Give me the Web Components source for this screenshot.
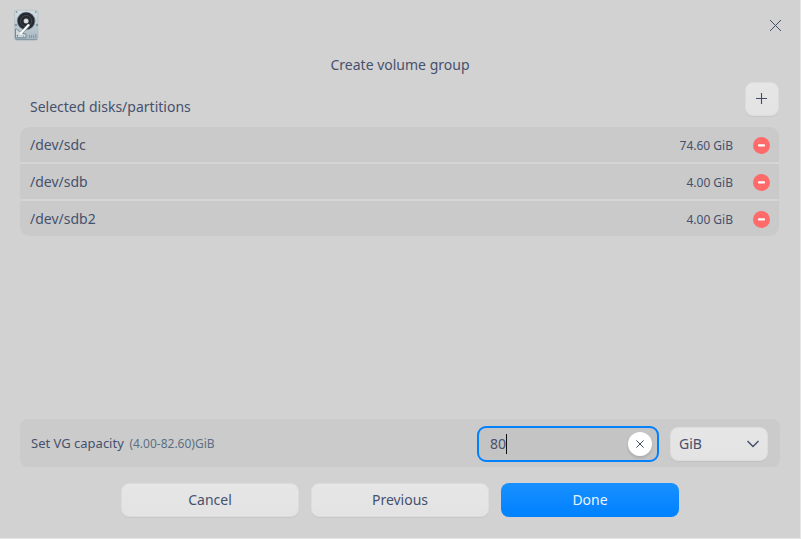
<!DOCTYPE html>
<html lang="en"><head><meta charset="utf-8"><title>Create volume group</title>
<style>
html,body{margin:0;height:100%;background:#e6e6e6}
body{font:14px/20px "Noto Sans",sans-serif;color:#46516d;overflow:hidden}
</style></head><body>
<vg-window>
  <disk-row slot="disks" size="74.60 GiB">/dev/sdc</disk-row>
  <disk-row slot="disks" size="4.00 GiB">/dev/sdb</disk-row>
  <disk-row slot="disks" size="4.00 GiB">/dev/sdb2</disk-row>
  <capacity-panel slot="capacity"></capacity-panel>
  <push-button slot="actions">Cancel</push-button>
  <push-button slot="actions">Previous</push-button>
  <push-button slot="actions" primary>Done</push-button>
</vg-window>
<script>
const define=(name,html)=>customElements.define(name,class extends HTMLElement{
  constructor(){super();this.attachShadow({mode:'open'}).innerHTML=html;}
  connectedCallback(){const s=this.shadowRoot.querySelector('[data-size]');if(s)s.textContent=this.getAttribute('size');}
});
define('push-button',`<style>
:host{display:flex;box-sizing:border-box;width:178px;height:34px;align-items:center;justify-content:center;border-radius:8px;background:linear-gradient(#e6e6e6,#e3e3e3);border:1px solid #dcdcdc;box-shadow:0 1px 1px #0000000d;padding-bottom:1px}
:host([primary]){background:linear-gradient(#1890ff,#0081ff);border:0;color:#ebf4ff;box-shadow:none}
:host([icon]){width:34px;padding:0}
:host([select]){width:98px;justify-content:space-between;padding:1px 7px 0 8px}
</style><slot></slot>`);
define('disk-icon',`<style>:host{display:block;width:26px;height:32px}svg{display:block}</style>
<svg width="26" height="32" viewBox="0 0 26 32"><defs>
<linearGradient id="g" x2="0" y2="1"><stop stop-color="#d3dee4"/><stop offset=".6" stop-color="#b9c8d0"/><stop offset="1" stop-color="#a6b5be"/></linearGradient></defs>
<rect x=".4" y="1.2" width="23.6" height="30" rx="2.5" fill="url(#g)" stroke="#a9b8c0" stroke-width=".6"/>
<path d="M1.5 30.5h21.5" stroke="#8799a4"/><path d="M1.6 3h2M20.8 3h2M2.6 2v2M21.8 2v2" stroke="#7b8b97" stroke-width=".7"/>
<circle cx="1.8" cy="16" r="1.2" fill="#8497a3"/><circle cx="23" cy="16" r="1.2" fill="#8497a3"/>
<circle cx="12.1" cy="12" r="9.3" fill="#828c94"/><circle cx="12.1" cy="12" r="8.5" fill="#252930"/>
<circle cx="12.1" cy="12" r="5.6" fill="none" stroke="#41464d" stroke-width="1"/>
<circle cx="12.1" cy="12" r="2.5" fill="#cfd3d4"/><circle cx="12.1" cy="12" r="1.1" fill="#eeeae4"/>
<path d="M1.5 20h1.2l4.3 4 5 1v3.8H1.5z" fill="#cfd9de" stroke="#6d808c" stroke-width=".9"/>
<path d="M6.8 24.7L14.6 16.3" stroke="#8b969e" stroke-width="2.8" stroke-linecap="round"/>
<path d="M6.8 24.4L14.4 16.2" stroke="#fff" stroke-width="1.9" stroke-linecap="round"/>
<circle cx="6.8" cy="24.6" r="1.5" fill="#f5f7f8"/><circle cx="3.4" cy="26.8" r=".7" fill="#51626e"/><circle cx="9.5" cy="27" r=".6" fill="#61717d"/>
<path d="M15.5 26v3M17.5 26v3M19.5 26v3M21.8 25v4" stroke="#81919b" stroke-width=".9"/></svg>`);
define('disk-row',`<style>
:host{display:flex;align-items:center;box-sizing:border-box;height:35px;padding:0 9px 0 10px;background:#cacaca}
.name{flex:1;padding-top:1px}.size{font-size:12px;padding-top:2px}svg{margin-left:20px;width:17px;height:17px;margin-top:2px}
</style><span class="name"><slot></slot></span><span class="size" data-size></span>
<svg viewBox="0 0 17 17"><circle cx="8.5" cy="8.5" r="8.5" fill="#ff6a6a"/><rect x="5" y="7.2" width="7" height="2.4" rx=".8" fill="#fff"/></svg>`);
define('capacity-field',`<style>
:host{display:flex;align-items:center;box-sizing:border-box;width:182px;height:36px;border:2px solid #0081ff;border-radius:9px;background:#c4c4c4;padding:0 5px 0 11px}
.caret{width:1px;height:20px;background:#111}.clear{margin-left:auto;width:24px;height:24px;border-radius:50%;background:#fff;box-shadow:0 2px 3px #00000020;display:flex;align-items:center;justify-content:center}
</style><span><slot></slot></span><i class="caret"></i><span class="clear"><svg width="10" height="10" viewBox="0 0 10 10"><path d="M1.4 1.4l7.2 7.2M8.6 1.4L1.4 8.6" stroke="#414d68" stroke-width="1"/></svg></span>`);
define('capacity-panel',`<style>
:host{display:flex;align-items:center;box-sizing:border-box;height:48px;padding:0 12px 0 11px;border-radius:8px;background:#cbcbcb;font-size:13px}
.range{font-size:12px;color:#5b7084;margin-left:5.6px;flex:1;padding-top:2px}capacity-field{font-size:14px;margin:1px 11px 0 0}push-button{font-size:14px;margin-top:1px}
</style><span>Set VG capacity</span><span class="range">(4.00-82.60)GiB</span><capacity-field>80</capacity-field>
<push-button select>GiB<svg width="14" height="8" viewBox="0 0 14 8"><path d="M1.5 1L7 6.5 12.5 1" fill="none" stroke="#414d68" stroke-width="1.4"/></svg></push-button>`);
define('vg-window',`<style>
:host{display:flex;flex-direction:column;box-sizing:border-box;width:800px;height:538px;background:#d2d2d2;padding:0 20px 21px}
header{display:flex;justify-content:space-between;height:50px;margin:0 -2px 0 -6px;padding-top:9px;box-sizing:border-box}
header svg{margin:11px 0 0}
h1{font:inherit;margin:5px 0 0;text-align:center;height:20px}
.head{display:flex;justify-content:space-between;height:34px;margin:7px 1px 11px 10px}
.head span{margin-top:15px}
.list{display:flex;flex-direction:column;gap:2px;width:759px;border-radius:9px;overflow:hidden;background:#d5d5d5}
.fill{flex:1}.actions{display:flex;gap:12px;justify-content:center;margin-top:16px}
</style><header><disk-icon></disk-icon><svg width="13" height="13" viewBox="0 0 13 13"><path d="M1 0l11 11M12 0L1 11" stroke="#414d68"/></svg></header>
<h1>Create volume group</h1>
<div class="head"><span>Selected disks/partitions</span><push-button icon><svg width="12" height="12" viewBox="0 0 12 12"><path d="M0 5.5h11M5.5 0v11" stroke="#414d68" stroke-width="1.1"/></svg></push-button></div>
<div class="list"><slot name="disks"></slot></div><div class="fill"></div>
<slot name="capacity"></slot><div class="actions"><slot name="actions"></slot></div>`);
</script></body></html>
